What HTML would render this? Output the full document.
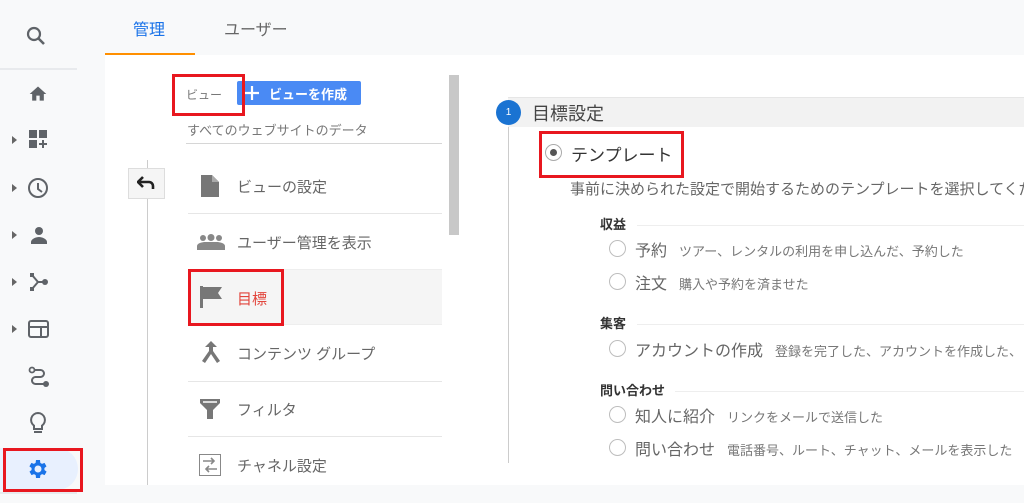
<!DOCTYPE html>
<html><head><meta charset="utf-8"><style>
*{margin:0;padding:0;box-sizing:border-box}
body{width:1024px;height:503px;overflow:hidden;background:#f8f9fa;position:relative;font-family:"Liberation Sans","Noto Sans CJK JP",sans-serif;color:#5f6368}
.a{position:absolute;white-space:nowrap}
.red{position:absolute;border:3px solid #e8171f}
.ic{position:absolute}
.sep{position:absolute;height:1px;background:#e6e6e6}
.rad{position:absolute;width:17px;height:17px;border:1.5px solid #bdbdbd;border-radius:50%;background:#fff}
.it{position:absolute;font-size:15px;color:#666}
.ro{position:absolute;font-size:16px;color:#666}
.ds{font-size:13px;color:#777;margin-left:12px}
.cat{position:absolute;font-size:13px;font-weight:bold;color:#333}
.tri{position:absolute;left:12px;width:0;height:0;border-left:5px solid #666;border-top:4px solid transparent;border-bottom:4px solid transparent}
</style></head><body>
<div class="a" style="left:0;top:68px;width:77px;height:2px;background:#e8eaed"></div>
<div class="a" style="left:105px;top:55px;width:919px;height:430px;background:#fff"></div>
<div class="a" style="left:133px;top:16px;font-size:16px;color:#1a73e8">管理</div>
<div class="a" style="left:224px;top:16px;font-size:16px;color:#666">ユーザー</div>
<div class="a" style="left:105px;top:53px;width:90px;height:2px;background:#ff8f00"></div>

<svg class="ic" style="left:24px;top:24px" width="24" height="24" viewBox="0 0 24 24"><circle cx="10" cy="10" r="6" fill="none" stroke="#5f6368" stroke-width="2.2"/><path d="M14.5 14.5L20 20" stroke="#5f6368" stroke-width="2.6"/></svg>
<svg class="ic" style="left:28px;top:84px" width="20" height="20" viewBox="0 0 24 24"><path d="M10 20v-6h4v6h5v-8h3L12 3 2 12h3v8z" fill="#5f6368"/></svg>
<div class="tri" style="top:136px"></div>
<svg class="ic" style="left:29px;top:130px" width="20" height="20" viewBox="0 0 20 20"><rect x="0" y="0" width="8" height="8" fill="#5f6368"/><rect x="10" y="0" width="8" height="8" fill="#5f6368"/><rect x="0" y="10" width="8" height="8" fill="#5f6368"/><path d="M14 10v8M10 14h8" stroke="#5f6368" stroke-width="2"/></svg>
<div class="tri" style="top:184px"></div>
<svg class="ic" style="left:27px;top:177px" width="22" height="22" viewBox="0 0 22 22"><circle cx="11" cy="11" r="9" fill="none" stroke="#5f6368" stroke-width="2"/><path d="M11 6v6l4 3" stroke="#5f6368" stroke-width="2" fill="none"/></svg>
<div class="tri" style="top:231px"></div>
<svg class="ic" style="left:29px;top:226px" width="20" height="20" viewBox="0 0 20 20"><circle cx="10" cy="5" r="4" fill="#5f6368"/><path d="M2 18v-2c0-3 5-5 8-5s8 2 8 5v2z" fill="#5f6368"/></svg>
<div class="tri" style="top:278px"></div>
<svg class="ic" style="left:29px;top:272px" width="20" height="20" viewBox="0 0 20 20"><path d="M3 3l6 7h7M3 17l6-7" stroke="#5f6368" stroke-width="2" fill="none"/><rect x="1" y="1" width="4" height="4" fill="#5f6368"/><rect x="1" y="15" width="4" height="4" fill="#5f6368"/><circle cx="16" cy="10" r="3" fill="#5f6368"/></svg>
<div class="tri" style="top:325px"></div>
<svg class="ic" style="left:28px;top:320px" width="21" height="18" viewBox="0 0 21 18"><rect x="1" y="1" width="19" height="16" rx="2" fill="none" stroke="#5f6368" stroke-width="2"/><path d="M1 7h19M13 7v10" stroke="#5f6368" stroke-width="2"/></svg>
<svg class="ic" style="left:28px;top:366px" width="22" height="22" viewBox="0 0 22 22"><circle cx="4" cy="4" r="2.5" fill="none" stroke="#5f6368" stroke-width="1.8"/><path d="M6.5 4h6a3.5 3.5 0 010 7h-5a3.5 3.5 0 000 7h8" stroke="#5f6368" stroke-width="2" fill="none"/><circle cx="18" cy="18" r="3" fill="#5f6368"/></svg>
<svg class="ic" style="left:29px;top:411px" width="18" height="24" viewBox="0 0 18 24"><path d="M9 2a7 7 0 00-4 12.7V18h8v-3.3A7 7 0 009 2z" fill="none" stroke="#5f6368" stroke-width="2"/><path d="M5 21h8" stroke="#5f6368" stroke-width="2"/></svg>
<div class="a" style="left:0;top:448px;width:78px;height:42px;background:#e8f0fe;border-radius:0 21px 21px 0"></div>
<svg class="ic" style="left:26px;top:457px" width="24" height="24" viewBox="0 0 24 24"><path fill="#1a73e8" d="M19.4 13a7.5 7.5 0 000-2l2.1-1.6-2-3.5-2.5 1a7 7 0 00-1.7-1L15 3h-4l-.4 2.9a7 7 0 00-1.7 1l-2.5-1-2 3.5L6.6 11a7.5 7.5 0 000 2l-2.1 1.6 2 3.5 2.5-1a7 7 0 001.7 1L11 21h4l.4-2.9a7 7 0 001.7-1l2.5 1 2-3.5zM13 15.5a3.5 3.5 0 110-7 3.5 3.5 0 010 7z" transform="translate(-1 0)"/></svg>
<div class="red" style="left:3px;top:448px;width:80px;height:44px"></div>
<div class="a" style="left:0;top:492px;width:77px;height:2px;background:#e8eaed"></div>

<div class="a" style="left:147px;top:160px;width:1px;height:325px;background:#ccc"></div>
<div class="a" style="left:128px;top:168px;width:37px;height:31px;background:#f5f5f5;border:1px solid #ddd"></div>
<svg class="ic" style="left:137px;top:176px" width="20" height="14" viewBox="0 0 20 14"><path d="M6 1L1 6l5 5M1 6h11a4 4 0 014 4v3" stroke="#222" stroke-width="2.6" fill="none"/></svg>
<div class="a" style="left:449px;top:75px;width:10px;height:160px;background:#c8c8c8"></div>
<div class="a" style="left:186px;top:86px;font-size:12px;color:#777">ビュー</div>
<div class="a" style="left:237px;top:81px;width:124px;height:24px;background:#4a8af4;border-radius:2px;color:#fff;font-size:13px;font-weight:bold;padding:3px 0 0 32px">ビューを作成</div>
<svg class="ic" style="left:245px;top:86px" width="14" height="14"><path d="M7 0v14M0 7h14" stroke="#fff" stroke-width="2.2"/></svg>
<div class="red" style="left:172px;top:74px;width:73px;height:42px"></div>
<div class="a" style="left:187px;top:120px;font-size:13px;color:#777">すべてのウェブサイトのデータ</div>
<div class="a" style="left:186px;top:143px;width:256px;height:1px;background:#d6d6d6"></div>

<svg class="ic" style="left:201px;top:175px" width="18" height="22" viewBox="0 0 18 22"><path d="M0 0h11l7 7v15H0z" fill="#777"/><path d="M11 0v7h7" fill="#aaa"/></svg>
<div class="it" style="left:237px;top:176px">ビューの設定</div>
<div class="sep" style="left:188px;top:213px;width:254px"></div>
<svg class="ic" style="left:197px;top:234px" width="28" height="16" viewBox="0 0 28 16"><circle cx="6" cy="4" r="3" fill="#888"/><circle cx="14" cy="3.5" r="3.5" fill="#888"/><circle cx="22" cy="4" r="3" fill="#888"/><path d="M0 16v-4c0-3 6-4 8-4h12c2 0 8 1 8 4v4z" fill="#888"/></svg>
<div class="it" style="left:237px;top:232px">ユーザー管理を表示</div>
<div class="a" style="left:188px;top:269px;width:254px;height:56px;background:#f5f5f5;border-top:1px solid #eee;border-bottom:1px solid #eee"></div>
<svg class="ic" style="left:200px;top:286px" width="22" height="22" viewBox="0 0 22 22"><path d="M0 0h3v22H0z" fill="#777"/><path d="M3 1h19l-4 6 4 6H3z" fill="#777"/></svg>
<div class="it" style="left:237px;top:288px;color:#e2453c">目標</div>
<div class="red" style="left:188px;top:269px;width:96px;height:57px"></div>
<svg class="ic" style="left:201px;top:341px" width="20" height="22" viewBox="0 0 20 22"><path d="M10 0l-6 6h4v4L1 20l3 2 6-9 6 9 3-2-7-10V6h4z" fill="#777"/></svg>
<div class="it" style="left:237px;top:343px">コンテンツ グループ</div>
<div class="sep" style="left:188px;top:381px;width:254px"></div>
<svg class="ic" style="left:200px;top:399px" width="20" height="20" viewBox="0 0 20 20"><path d="M0 0h20v4l-7 7v9H7v-9L0 4z" fill="#777"/><path d="M3 3h14" stroke="#fff" stroke-width="1.5"/></svg>
<div class="it" style="left:237px;top:399px">フィルタ</div>
<div class="sep" style="left:188px;top:436px;width:254px"></div>
<svg class="ic" style="left:199px;top:454px" width="22" height="22" viewBox="0 0 22 22"><rect x="0.5" y="0.5" width="21" height="21" fill="none" stroke="#888"/><path d="M4 7h11M12 4l3 3-3 3M18 15H7M10 12l-3 3 3 3" stroke="#888" stroke-width="1.6" fill="none"/></svg>
<div class="it" style="left:237px;top:455px">チャネル設定</div>

<div class="a" style="left:508px;top:97px;width:516px;height:30px;background:#f2f2f2;border-top:1px solid #e6e6e6"></div>
<div class="a" style="left:508px;top:127px;width:1px;height:336px;background:#ccc"></div>
<div class="a" style="left:496px;top:100px;width:25px;height:25px;border-radius:50%;background:#1a73d2;color:#fff;font-size:10px;text-align:center;line-height:25px">1</div>
<div class="a" style="left:532px;top:100px;font-size:18px;color:#444">目標設定</div>
<div class="rad" style="left:545px;top:144px;border-color:#aaa"><div style="position:absolute;left:3.5px;top:3.5px;width:7px;height:7px;border-radius:50%;background:#555"></div></div>
<div class="a" style="left:571px;top:141px;font-size:17px;color:#333">テンプレート</div>
<div class="red" style="left:539px;top:131px;width:145px;height:47px"></div>
<div class="a" style="left:570px;top:178px;font-size:15px;color:#666">事前に決められた設定で開始するためのテンプレートを選択してください</div>

<div class="cat" style="left:600px;top:214px">収益</div>
<div class="sep" style="left:637px;top:225px;width:387px;background:#eee"></div>
<div class="rad" style="left:609px;top:240px"></div>
<div class="ro" style="left:635px;top:237px">予約<span class="ds">ツアー、レンタルの利用を申し込んだ、予約した</span></div>
<div class="rad" style="left:609px;top:273px"></div>
<div class="ro" style="left:635px;top:270px">注文<span class="ds">購入や予約を済ませた</span></div>

<div class="cat" style="left:600px;top:313px">集客</div>
<div class="sep" style="left:637px;top:324px;width:387px;background:#eee"></div>
<div class="rad" style="left:609px;top:340px"></div>
<div class="ro" style="left:635px;top:337px">アカウントの作成<span class="ds">登録を完了した、アカウントを作成した、</span></div>

<div class="cat" style="left:600px;top:380px">問い合わせ</div>
<div class="sep" style="left:675px;top:391px;width:349px;background:#eee"></div>
<div class="rad" style="left:609px;top:406px"></div>
<div class="ro" style="left:635px;top:403px">知人に紹介<span class="ds">リンクをメールで送信した</span></div>
<div class="rad" style="left:609px;top:439px"></div>
<div class="ro" style="left:635px;top:436px">問い合わせ<span class="ds">電話番号、ルート、チャット、メールを表示した</span></div>
</body></html>
